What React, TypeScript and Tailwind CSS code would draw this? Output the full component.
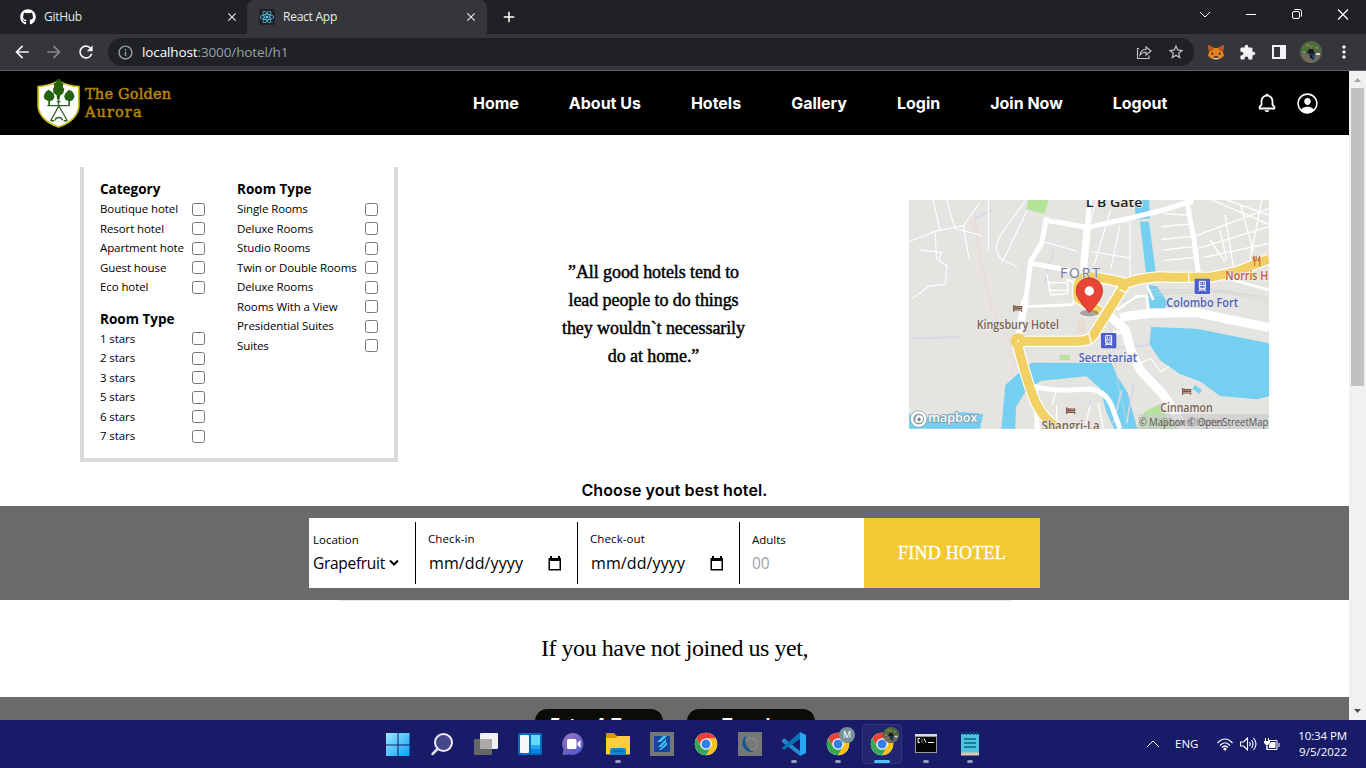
import React from "react";
import { FaGithub, FaReact } from "react-icons/fa";
import { BiBell } from "react-icons/bi";
import { IoPersonCircleOutline } from "react-icons/io5";
import { MdArrowBack, MdArrowForward, MdRefresh, MdExtension, MdClose, MdAdd, MdInfoOutline, MdStarOutline, MdMoreVert } from "react-icons/md";

const UI = "font-['Open_Sans','Noto_Sans',sans-serif]";

function Portrait({ className }: { className: string }) {
  return (
    <svg viewBox="0 0 22 22" className={className}>
      <circle cx="11" cy="11" r="11" fill="#56634a" />
      <path d="M2 6 Q6 1 11 1 Q17 1 20 6 L19 10 L13 8 L8 9 L2 12Z" fill="#4d7036" />
      <path d="M1 14 L10 12 L15 13 L21 13 Q19 21 11 22 Q4 21 1 14Z" fill="#6f6b60" />
      <path d="M2 10l4 1-2 2zM15 5l3 2-2 1zM5 5l3-2 1 2z" fill="#84a35b" />
      <circle cx="11" cy="5.8" r="1.8" fill="#8d6c55" />
      <path d="M9 8 L13 8 L14.500 12 L13 18 L10 17 L9.500 13 L7 12Z" fill="#16181d" />
      <path d="M9 12 L15 13 L14 19 L12 19 L12 15Z" fill="#263b5b" />
      <path d="M16 12h4v2h-4z" fill="#d9d9d2" />
    </svg>
  );
}

function TabStrip() {
  return (
    <div className={`flex h-[34px] bg-[#202124] text-[12px] text-[#e8eaed] ${UI}`}>
      <div className="flex w-[247px] items-center pl-5">
        <FaGithub className="h-4 w-4 text-white" />
        <span className="ml-2 flex-1 tracking-[-0.3px]">GitHub</span>
        <MdClose className="mr-2 h-[14px] w-[14px]" stroke="currentColor" />
      </div>
      <div className="flex w-[240px] items-center rounded-t-lg bg-[#35363a] pl-3">
        <span className="flex h-4 w-4 items-center justify-center rounded-[2px] bg-[#20232a]">
          <FaReact className="h-[14px] w-[14px] text-[#61dafb]" />
        </span>
        <span className="ml-2 flex-1 tracking-[-0.25px]">React App</span>
        <MdClose className="mr-[9px] h-[14px] w-[14px]" stroke="currentColor" />
      </div>
      <div className="flex flex-1 items-center pl-[13px]">
        <MdAdd className="h-[18px] w-[18px] text-white" stroke="currentColor" />
      </div>
      <div className="flex items-center pb-[7px] text-white">
        <svg viewBox="0 0 46 28" className="h-7 w-[46px]" fill="none" stroke="currentColor"><path d="M18 12l5 5 5-5" /></svg>
        <svg viewBox="0 0 46 28" className="h-7 w-[46px]" fill="none" stroke="currentColor"><path d="M18 14.500h10" /></svg>
        <svg viewBox="0 0 46 28" className="h-7 w-[46px]" fill="none" stroke="currentColor"><rect x="18.500" y="11.500" width="7" height="7" rx="1.500" /><path d="M20.500 9.500h5a2 2 0 0 1 2 2v5" /></svg>
        <svg viewBox="0 0 46 28" className="h-7 w-[46px]" fill="none" stroke="currentColor" strokeWidth="1.200"><path d="M18 9.500l10 10M28 9.500l-10 10" /></svg>
      </div>
    </div>
  );
}

function Toolbar() {
  return (
    <div className={`flex h-[37px] items-center border-b border-[#5f6063] bg-[#35363a] pl-3 text-[#f1f3f4] ${UI}`}>
      <MdArrowBack className="h-5 w-5" />
      <MdArrowForward className="ml-3 h-5 w-5 text-[#85868a]" />
      <MdRefresh className="ml-3 h-5 w-5" />
      <div className="ml-3 flex h-7 w-[1086px] items-center rounded-full bg-[#202124] pl-[9px]">
        <MdInfoOutline className="h-[17px] w-[17px] text-[#9aa0a6]" />
        <span className="ml-2 flex-1 text-[13.5px] tracking-[-0.12px] text-white">localhost<span className="text-[#9aa0a6]">:3000/hotel/h1</span></span>
        <svg viewBox="0 0 16 16" className="h-4 w-4 text-[#c5c7ca]" fill="none" stroke="currentColor" strokeWidth="1.100">
          <path d="M3 4.500H1.500v10H13v-3M4 11c.5-4 3-5.500 6-5.500V3l5 4-5 4V8.300C7.500 8.300 5.500 9 4 11Z" />
        </svg>
        <MdStarOutline className="ml-[15px] mr-[9px] h-[18px] w-[18px] text-[#c5c7ca]" />
      </div>
      <svg viewBox="0 0 16 16" className="ml-[14px] h-4 w-4">
        <path d="M0 1l6 3h4l6-3-1 7 1 4-4 3-2-1H6l-2 1-4-3 1-4z" fill="#e8821e" />
        <path d="M0 1l6 3-2 3-3 1zM16 1l-6 3 2 3 3 1z" fill="#b85b1d" />
        <path d="M3 8l3 2-2 1zM13 8l-3 2 2 1z" fill="#3b2c20" />
        <path d="M6 12h4l-.500 2h-3z" fill="#3a3b40" /><path d="M5 14h6l-1 1.500H6z" fill="#d2c8bc" />
      </svg>
      <MdExtension className="ml-[15px] h-[17px] w-[17px]" />
      <svg viewBox="0 0 14 14" className="ml-4 h-[14px] w-[14px]"><path d="M0 0h14v14H0zM2 2v10h6V2z" fill="#f1f3f4" fillRule="evenodd" /></svg>
      <Portrait className="ml-[14px] h-[22px] w-[22px]" />
      <MdMoreVert className="ml-3 h-5 w-5" />
    </div>
  );
}

function Shield() {
  return (
    <svg viewBox="110 232 134 152" className="h-[50px] w-[45px]">
      <path d="M115 258 Q143 257 177 242 Q209 257 239 258 V318 Q234 361 177 381 Q120 361 115 318Z" fill="#fff" stroke="#c9bd1d" strokeWidth="5" />
      <g fill="#24620f">
        <path d="M172 236h11l3 9 6 5-2 9 5 7-4 13-9 6-2 12h-7l-2-13-9-6-2-12 4-8-2-8 8-5z" />
        <path d="M146 268l8 4 8 7 3 9-5 12-9 2v13h-5v-13l-10-5-4-8 4-12zM209 268l10 5 4 7 3 9-6 11-8 3v12h-5v-13l-9-4-4-10 4-10z" />
      </g>
      <path d="M143 316h68M177 297v20M172 304h11M178 317l-25 45M178 317l26 45M153 362h11M193 362h11M167 361q1-9 11-9t11 9" fill="none" stroke="#2d6129" strokeWidth="4" />
    </svg>
  );
}

const links = ["Home", "About Us", "Hotels", "Gallery", "Login", "Join Now", "Logout"];

function Header() {
  return (
    <header className="flex h-16 items-center bg-black pl-9 text-white">
      <Shield />
      <div className="ml-1 w-[388px] font-['DejaVu_Serif',serif] text-[14.5px] leading-[18px] text-[#b8860b] [-webkit-text-stroke:0.5px_#b8860b]">
        <div className="tracking-[0.2px]">The Golden</div>
        <div className="tracking-[1.1px]">Aurora</div>
      </div>
      <nav className="flex flex-1 gap-[50px] whitespace-nowrap font-['Inter',sans-serif] text-[16px] font-bold tracking-[-0.01px]">
        {links.map((l) => <a key={l}>{l}</a>)}
      </nav>
      <BiBell className="h-[22px] w-[22px]" />
      <IoPersonCircleOutline className="ml-[17px] mr-[29px] h-[25px] w-[25px]" />
    </header>
  );
}

function Group({ title, items, width, className = "" }: { title: string; items: string[]; width: string; className?: string }) {
  return (
    <div className={`${width} ${className}`}>
      <h3 className="h-5 text-[13.5px] font-bold leading-5">{title}</h3>
      {items.map((item, i) => (
        <label key={i} className="flex h-[19.5px] items-center justify-between whitespace-nowrap text-[11.5px] tracking-[-0.1px]">
          {item}
          <input type="checkbox" className="m-0 mt-[0.5px] h-[13px] w-[13px]" />
        </label>
      ))}
    </div>
  );
}

function Filters() {
  return (
    <div className={`flex h-[295px] w-[318px] border-x-4 border-b-4 border-[#d9d9d9] pl-4 pt-3 text-black ${UI}`}>
      <div>
        <Group title="Category" width="w-[105px]" items={["Boutique hotel", "Resort hotel", "Apartment hote", "Guest house", "Eco hotel"]} />
        <Group title="Room Type" width="w-[105px]" className="mt-3" items={["1 stars", "2 stars", "3 stars", "5 stars", "6 stars", "7 stars"]} />
      </div>
      <Group title="Room Type" width="w-[141px]" className="ml-8" items={["Single Rooms", "Deluxe Rooms", "Studio Rooms", "Twin or Double Rooms", "Deluxe Rooms", "Rooms With a View", "Presidential Suites", "Suites"]} />
    </div>
  );
}

function Station({ x, y }: { x: number; y: number }) {
  return (
    <g transform={`translate(${x} ${y})`}>
      <rect width="46" height="46" rx="4" fill="#4a5fcd" />
      <path d="M14 8h18v22H14zM17 30l-4 8M29 30l4 8M14 21h18M19 11v7M27 11v7M15 34h16" fill="none" stroke="#fff" strokeWidth="3" />
      <path d="M17 25h3v2h-3zM26 25h3v2h-3z" fill="#fff" />
    </g>
  );
}

function Bed({ x, y }: { x: number; y: number }) {
  return (
    <g transform={`translate(${x} ${y})`} fill="none" stroke="#7b5140" strokeWidth="3.500">
      <path d="M2 0v20M2 15h24v5M2 10h24V5H12v6" /><circle cx="7" cy="5" r="1.500" />
    </g>
  );
}

function HotelMap() {
  return (
    <svg viewBox="27 30 1080 687" preserveAspectRatio="none" className="block h-[229px] w-[360px]">
      <rect x="27" y="30" width="1080" height="687" fill="#e5e4e0" />
      <path d="M225 80 L240 200 L275 360 L355 500 L330 560" fill="none" stroke="#e7ddd6" strokeWidth="6" />
      <ellipse cx="545" cy="410" rx="15" ry="25" fill="#e9dcd2" />
      <g fill="#75cff0">
        <path d="M705 30h42l3 55-44 4zM720 95h27l20 150-29 4zM741 285l30 4 33 50-10 16h-45z" />
        <path d="M753 411L890 416 1107 460V619L1070 628 960 618 902 575 840 552 780 511 749 463z" />
        <path d="M395 518L635 519 652 560 683 608 712 716H643L620 669 601 596 560 559 424 572 380 600 364 625 348 652 346 716H304L316 585 372 535z" />
        <path d="M27 667L40 690 110 677 185 666 250 672 240 716H27zM884 585l22 14-7 12-22-14z" />
      </g>
      <g fill="#b3e49a"><path d="M385 30h61l-13 42-54-14zM479 495h31v15h-31zM712 716l20-50 50-25 15 35 35 41z" /></g>
      <g fill="none" stroke="#d4d4d0" strokeWidth="2">
        <path d="M640 350Q700 310 850 300T1107 335M645 359Q710 318 850 307T1107 341M740 302Q850 290 1107 322M620 360L640 470 655 590 680 690M800 300L980 340M790 312L1000 300" />
      </g>
      <g fill="none" stroke="#d6d6e6" strokeWidth="5">
        <path d="M375 35L305 130Q275 175 303 207L353 231M382 60L305 220M27 155L105 124 190 107 238 40M100 30L120 123M140 30L165 115M190 107L207 207M105 124L110 210M60 180l65 7-9 25 25 14-6 58-47 4-52 38M165 115L245 137M265 30V180M225 85l55-28M36 445L178 441M590 30L570 100M632 60L582 225M660 105L632 238M690 88V270M577 185L690 204M430 155L533 184M435 285Q445 210 458 205V180M640 475L750 465M680 700L700 585M570 630L558 716M640 700L665 600M720 520l32-15 30 40" />
      </g>
      <g fill="none" stroke="#fff" strokeWidth="4">
        <path d="M375 35L305 130Q275 175 303 207L353 231M382 60L305 220M27 155L105 124 190 107 238 40M100 30L120 123M140 30L165 115M190 107L207 207M105 124L110 210M60 180l65 7-9 25 25 14-6 58-47 4-52 38M165 115L245 137M265 30V180M590 30L570 100M632 60L582 225M660 105L632 238M690 88V270M577 185L690 204M430 155L533 184M440 250l13 65 50-5V278h-55v23h55M935 30L1107 103M980 30L1107 75M875 142L1107 55M895 175L1107 110M910 202L1107 160M975 75L1000 230M1020 40L1060 180M1085 30L1050 210M790 70L875 77M785 110L870 102M785 148L875 140M790 180L880 170M790 212L885 202M930 150L975 215M960 120L980 210M720 520l32-15 30 40 25-15M470 600L455 645M470 710V645M570 645L555 716M595 640L610 716" />
        <path d="M380 350L515 344 527 325M497 268L530 280M650 360L710 320 740 317 745 360M980 265L1107 300M740 285L760 330" strokeWidth="8" />
      </g>
      <g fill="none" stroke="#fff" strokeLinejoin="round">
        <path d="M392 216L374 350 353 440M440 80L425 160 390 217M434 91L563 112 693 84 790 60 880 32M395 220L470 234 545 252M570 30L560 125M860 30L882 150 895 250" strokeWidth="15" />
        <path d="M562 115L550 240M355 440L376 330" strokeWidth="22" />
        <path d="M615 365L677 420Q690 490 724 544L792 616 855 716M660 383Q700 375 760 370L890 368 980 387 1107 413" strokeWidth="27" />
        <path d="M637 440Q643 422 682 423M405 590Q460 603 510 600L570 597Q615 602 634 645L660 716M405 590L412 716" strokeWidth="15" />
      </g>
      <g fill="none" stroke="#fff" strokeWidth="34" strokeLinejoin="round">
        <path d="M350 454H530Q570 453 580 435L677 280M677 280Q610 263 560 259 525 265 535 325L600 365M677 280Q750 255 810 262H930L1010 245 1107 207M350 454Q385 590 408 640 435 695 480 716" />
      </g>
      <g fill="none" stroke="#f1d163" strokeWidth="27" strokeLinejoin="round">
        <path d="M350 454H530Q570 453 580 435L677 280M677 280Q610 263 560 259 525 265 535 325L600 365M677 280Q750 255 810 262H930L1010 245 1107 207M350 454Q385 590 408 640 435 695 480 716" />
      </g>
      <circle cx="355" cy="453" r="23" fill="#f1d163" /><circle cx="355" cy="453" r="3" fill="#fff" />
      <path d="M567 430l6 28M658 298l18 9M866 250v27" stroke="#fff" strokeWidth="4" />
      <Station x={884} y={266} /><Station x={603} y={429} />
      <Bed x={339} y={345} /><Bed x={498} y={652} /><Bed x={846} y={594} />
      <path d="M1060 199v12h9v-12M1064 199v30M1079 198v31M1079 200q-8 10 0 16" fill="none" stroke="#cc713a" strokeWidth="3.500" />
      <g fontFamily="'Open Sans', sans-serif" fontSize="35" fontWeight="600" stroke="#efeeea" strokeWidth="4" paintOrder="stroke">
        <text x="557" y="51" fill="#222" fontSize="38" fontWeight="600" textLength="170" lengthAdjust="spacingAndGlyphs">L B Gate</text>
        <text x="480" y="263" fill="#737ba8" fontSize="42" fontWeight="400" textLength="120">FORT</text>
        <text x="230" y="417" fill="#776455" textLength="247" lengthAdjust="spacingAndGlyphs">Kingsbury Hotel</text>
        <text x="799" y="352" fill="#4c5fb9" textLength="215" lengthAdjust="spacingAndGlyphs">Colombo Fort</text>
        <text x="536" y="515" fill="#4c5fb9" textLength="175" lengthAdjust="spacingAndGlyphs">Secretariat</text>
        <text x="976" y="271" fill="#c65c2c" textLength="129" lengthAdjust="spacingAndGlyphs">Norris H</text>
        <text x="781" y="665" fill="#776455" textLength="157" lengthAdjust="spacingAndGlyphs">Cinnamon</text>
        <text x="425" y="720" fill="#776455" textLength="174" lengthAdjust="spacingAndGlyphs">Shangri-La</text>
      </g>
      <ellipse cx="568" cy="369" rx="28" ry="10" fill="#555" opacity=".45" />
      <path d="M568 368Q528 327 528 303A40 40 0 0 1 608 303Q608 327 568 368Z" fill="#e94335" stroke="#b9342a" strokeWidth="2" />
      <circle cx="568" cy="303" r="14" fill="#fff" />
      <rect x="714" y="672" width="393" height="45" fill="#ccc" fillOpacity=".7" />
      <text x="717" y="707" fontFamily="'Open Sans', sans-serif" fontSize="31" fill="#555" textLength="388" lengthAdjust="spacingAndGlyphs">© Mapbox © OpenStreetMap</text>
      <text x="781" y="707" fontFamily="'Open Sans', sans-serif" fontSize="31" fill="#776455" opacity=".55" textLength="190" lengthAdjust="spacingAndGlyphs">Grand Hotel</text>
      <circle cx="56" cy="687" r="20" fill="none" stroke="#fff" strokeWidth="9" /><circle cx="56" cy="687" r="25" fill="none" stroke="#81939d" strokeWidth="2" /><circle cx="56" cy="687" r="16" fill="#81939d" />
      <path d="M46 697q-3-20 10-22 15 1 13 14-3 14-23 8z" fill="#fff" /><path d="M57 680l3 6 5 2-5 3-3 5-3-6-5-2 5-2z" fill="#6b7b80" />
      <text x="84" y="697" fontFamily="'Open Sans', sans-serif" fontWeight="600" fontSize="38" fill="#fff" stroke="#81939d" strokeWidth="4" paintOrder="stroke" textLength="148" lengthAdjust="spacingAndGlyphs">mapbox</text>
    </svg>
  );
}

function DateField({ label }: { label: string }) {
  return (
    <div className="my-1 flex w-[162px] flex-col border-l border-black pl-3">
      <span className="mt-[8px] h-5 text-[11.5px] leading-[18px] tracking-[0.1px]">{label}</span>
      <span className="mt-px flex items-center text-[16px] leading-6">
        <span className="w-[120px] pl-px tracking-[0.1px]">mm/dd/yyyy</span>
        <svg viewBox="0 0 14 15" className="h-[15px] w-[14px]"><path d="M2 0h2v2h6V0h2v2h1v12.500H.500V2H2zM2 5v8h9.500V5z" fill="#000" fillRule="evenodd" /></svg>
      </span>
    </div>
  );
}

function SearchBar() {
  return (
    <div className="flex h-[94px] justify-center bg-[#6a6a6a] pt-3">
      <div className={`flex h-[70px] w-[731px] bg-white text-black ${UI}`}>
        <div className="flex w-[106px] flex-col pl-1">
          <span className="mt-[13px] h-5 text-[11.5px] leading-[18px]">Location</span>
          <span className="flex items-center text-[15.5px] leading-6 tracking-[-0.3px]">
            <span className="w-[76px]">Grapefruit</span>
            <svg viewBox="0 0 10 6" className="h-[6px] w-[10px]" fill="none" stroke="#000" strokeWidth="2"><path d="M1 .500l4 4 4-4" /></svg>
          </span>
        </div>
        <DateField label="Check-in" />
        <DateField label="Check-out" />
        <div className="my-1 flex w-[125px] flex-col border-l border-black pl-3">
          <span className="mt-[9px] h-5 text-[11.5px] leading-[18px]">Adults</span>
          <span className="text-[15.5px] leading-6 text-[#9ca3af]">00</span>
        </div>
        <div className="flex flex-1 items-center justify-center bg-[#f3c931] font-['Liberation_Serif',serif] text-[18px] tracking-[0.25px] text-white [-webkit-text-stroke:0.3px_white]">
          <span>FIND HOTEL</span>
        </div>
      </div>
    </div>
  );
}

function Page() {
  return (
    <main className="flex h-[649px] w-[1349px] flex-col overflow-hidden bg-white">
      <Header />
      <section className="flex h-[327px] pl-20 pt-8">
        <Filters />
        <p className="ml-[158px] mt-[91px] w-[195px] whitespace-nowrap text-center font-['Liberation_Serif',serif] text-[18px] leading-7 tracking-[-0.08px] text-black [-webkit-text-stroke:0.45px_black]">
          ”All good hotels tend to<br />lead people to do things<br />they wouldn`t necessarily<br />do at home.”
        </p>
        <div className="ml-[158px] mt-[33px]"><HotelMap /></div>
      </section>
      <h2 className="h-[44px] pt-4 text-center font-['Inter',sans-serif] text-[16px] font-semibold leading-6 tracking-[0.12px] text-black">Choose yout best hotel.</h2>
      <SearchBar />
      <div className="mx-auto h-px w-[673px] shrink-0 bg-[#e5e7eb]" />
      <p className="h-24 shrink-0 pt-[29px] text-center font-['Liberation_Serif',serif] text-[24px] leading-9 tracking-[-0.45px] text-black">If you have not joined us yet,</p>
      <div className="flex flex-1 justify-center gap-6 overflow-hidden bg-[#6a6a6a] pt-3 font-['Inter',sans-serif] text-[16px] font-bold text-white">
        <div className="h-10 w-32 rounded-xl bg-[#0c0c06] pt-[5px] text-center leading-5">Enter A Tour</div>
        <div className="h-10 w-32 rounded-xl bg-[#0c0c06] pt-[5px] text-center leading-5">Travels</div>
      </div>
    </main>
  );
}

function Scrollbar() {
  return (
    <div className="flex w-[17px] flex-col items-center justify-between bg-[#f1f1f1]">
      <div className="flex flex-col items-center">
        <svg viewBox="0 0 17 17" className="h-[17px] w-[17px]"><path d="M5 11l3.500-4 3.500 4z" fill="#a3a3a3" /></svg>
        <div className="h-[298px] w-[13px] bg-[#c1c1c1]" />
      </div>
      <svg viewBox="0 0 17 17" className="h-[17px] w-[17px]"><path d="M5 6l3.500 4L12 6z" fill="#505050" /></svg>
    </div>
  );
}

function ChromeLogo() {
  return (
    <svg viewBox="0 0 24 24" className="h-6 w-6">
      <circle cx="12" cy="12" r="11.200" fill="#fff" />
      <path d="M2.300 6.400A11.200 11.200 0 0 1 21.700 6.400H12A5.600 5.600 0 0 0 7.150 14.800Z" fill="#ea4335" />
      <path d="M21.700 6.400A11.200 11.200 0 0 1 12 23.200L16.850 14.800A5.600 5.600 0 0 0 12 6.400Z" fill="#fbc116" />
      <path d="M12 23.200A11.200 11.200 0 0 1 2.300 6.400L7.150 14.800A5.600 5.600 0 0 0 16.850 14.800Z" fill="#34a853" />
      <circle cx="12" cy="12" r="5.600" fill="#fff" /><circle cx="12" cy="12" r="4.500" fill="#327fe8" />
    </svg>
  );
}

function TaskItem({ children, dot, active }: { children: React.ReactNode; dot?: boolean; active?: boolean }) {
  return (
    <div className="flex h-12 w-11 flex-col items-center pt-1">
      <div className={active ? "flex h-10 w-10 flex-col items-center rounded-[4px] bg-[#21266f] pt-2 outline-1 -outline-offset-1 outline-[#30357f]" : "flex h-10 w-10 flex-col items-center pt-2"}>
        <div className="relative h-6 w-6">{children}</div>
        {active ? <div className="mt-1 h-[3px] w-4 rounded-full bg-[#4cc2ff]" /> : dot ? <div className="mt-1 h-[3px] w-[6px] rounded-full bg-[#9798bd]" /> : null}
      </div>
    </div>
  );
}

function Taskbar() {
  const s = "h-6 w-6";
  return (
    <footer className={`flex h-12 w-full bg-[#171b68] pl-[376px] text-white ${UI}`}>
      <TaskItem><svg viewBox="0 0 24 24" className={s}><defs><linearGradient id="win" x2="1" y2="1"><stop stopColor="#9be8ff" /><stop offset="1" stopColor="#0aa0f6" /></linearGradient></defs><path d="M0 1h11.500v11.500H0zM12.500 1H23.500v11.500h-11zM0 13.500h11.500v10.500H0zM12.500 13.500h11v10.500h-11z" fill="url(#win)" /></svg></TaskItem>
      <TaskItem><svg viewBox="0 0 24 24" className={s}><circle cx="13.500" cy="10.500" r="8.500" fill="#44488a" stroke="#ececf2" strokeWidth="2" /><path d="M7.500 17l-5 5" stroke="#dedee8" strokeWidth="2.500" strokeLinecap="round" /></svg></TaskItem>
      <TaskItem><svg viewBox="0 0 24 24" className={s}><rect x="6" y="1" width="18" height="16" rx="1" fill="#f1f1f3" /><rect y="7" width="18" height="16" rx="1" fill="#666" /><path d="M6 7h12v10H6z" fill="#aaa" /></svg></TaskItem>
      <TaskItem><svg viewBox="0 0 24 24" className={s}><rect y="1" width="24" height="22" rx="1.500" fill="#0569b9" /><rect x="2" y="3" width="9" height="18" rx="1" fill="#f6f6f6" /><path d="M13 3h9v10h-9z" fill="#66d7ff" /><path d="M13 13h9v4h-9z" fill="#24a8f1" /><path d="M13 17h9v4h-9z" fill="#0584e8" /></svg></TaskItem>
      <TaskItem><svg viewBox="0 0 24 24" className={s}><defs><linearGradient id="chat" x2=".7" y2="1"><stop stopColor="#9d78b4" /><stop offset="1" stopColor="#5358cc" /></linearGradient></defs><path d="M12 1A11 11 0 1 1 7.500 22.500L.500 23l1-6A11 11 0 0 1 12 1Z" fill="url(#chat)" /><rect x="5" y="7" width="9.500" height="10" rx="1.500" fill="#fff" /><path d="M15.500 11l3-3v8l-3-3z" fill="#fff" /></svg></TaskItem>
      <TaskItem dot><svg viewBox="0 0 24 24" className={s}><path d="M0 2q0-1 1-1h7l3 3h12q1 0 1 1v17H0z" fill="#d99600" /><path d="M0 6h9l3-2h12v18.500H0z" fill="#ffce3e" /><path d="M4 23v-5q0-2 2-2h12q2 0 2 2v5z" fill="#1685d1" /><path d="M7 19h10" stroke="#075891" /></svg></TaskItem>
      <TaskItem><svg viewBox="0 0 24 24" className={s}><path d="M0 0h24v24H0z" fill="#777" /><path d="M4 4h16v16H4z" fill="#16459d" /><path d="M13 4h4l-6 6H7zM16 7v3l-5 5H8zM17 10v3l-6 5H9z" fill="#42bdf0" /></svg></TaskItem>
      <TaskItem><ChromeLogo /></TaskItem>
      <TaskItem><svg viewBox="0 0 24 24" className={s}><path d="M0 0h24v24H0z" fill="#777" /><circle cx="13" cy="12" r="6" fill="none" stroke="#858585" strokeWidth="2" /><path d="M8 3Q5 15 16 20 7 21 4.500 13 4 7 8 3z" fill="#17568f" /></svg></TaskItem>
      <TaskItem dot><svg viewBox="0 0 24 24" className={s}><path d="M0 8l2-2 16 13v5L0 10z" fill="#2489ca" /><path d="M0 16L18 0v7L2 18z" fill="#0872b9" /><path d="M18 0l6 3v18l-6 3z" fill="#27a4f2" /></svg></TaskItem>
      <TaskItem dot><ChromeLogo /><span className="absolute -right-[5px] -top-[5px] flex h-4 w-4 items-center justify-center rounded-full bg-[#78909c] text-[9px]">M</span></TaskItem>
      <TaskItem active><ChromeLogo /><Portrait className="absolute -right-[5px] -top-[5px] h-4 w-4" /></TaskItem>
      <TaskItem dot><svg viewBox="0 0 24 24" className={s}><path d="M1 2h22v19H1z" fill="#9a9a9a" /><path d="M2 5h20v15H2z" fill="#050505" /><path d="M1 2h22v2H1z" fill="#ddd" /><path d="M6 6.500H4v4h2M8 7.500v1M8 9.500v1M10 6.500l2 4M14 10.500h6" fill="none" stroke="#fff" /></svg></TaskItem>
      <TaskItem dot><svg viewBox="0 0 24 24" className={s}><path d="M3 2h18v19H3z" fill="#4fc3dd" /><path d="M3 20.500h18v3H3z" fill="#dbc6b0" /><path d="M5 0v3M8.500 0v3M12 0v3M15.500 0v3M19 0v3" stroke="#095d7d" strokeWidth="1.500" /><path d="M6 7h12M6 11h12M6 15h12" stroke="#096582" strokeWidth="1.500" /></svg></TaskItem>
      <div className="ml-[152px] flex flex-1 items-center">
        <svg viewBox="0 0 14 8" className="ml-0.5 h-2 w-[14px]" fill="none" stroke="#fff"><path d="M1 7l6-6 6 6" /></svg>
        <span className="ml-[15px] w-[42px] text-[11.5px]">ENG</span>
        <svg viewBox="0 0 16 13" className="h-[13px] w-4" fill="none" stroke="#fff" strokeWidth="1.200"><path d="M.500 5Q8-3 15.500 5M3 7.500Q8 2 13 7.500M5 9.500Q8 6.500 11 9.500" /><circle cx="8" cy="11" r="1" fill="#fff" /></svg>
        <svg viewBox="0 0 17 14" className="ml-[7px] h-[14px] w-[17px]" fill="none" stroke="#fff" strokeWidth="1.100"><path d="M.500 5h3l4-4v12l-4-4h-3zM9.500 5q1.500 2 0 4M11.500 3q3 4 0 8M13.500 1q5 6 0 12" /></svg>
        <svg viewBox="0 0 16 13" className="ml-[7px] h-[13px] w-4" fill="none" stroke="#fff"><path d="M5 2.500h8v9H3V8M15 5v4M1.500 0v3M4.500 0v3" /><path d="M0 3h6v2L4 7H2L0 5z" fill="#fff" stroke="none" /><path d="M3 7v5" /><path d="M7 4h4.500v6H5V7z" fill="#fff" stroke="none" /></svg>
        <div className="ml-auto mr-[19px] text-right text-[11.5px] leading-4"><div className="tracking-[-0.1px]">10:34 PM</div><div>9/5/2022</div></div>
      </div>
    </footer>
  );
}

export default function App() {
  return (
    <div className="flex h-[768px] w-[1366px] flex-col overflow-hidden bg-white">
      <TabStrip />
      <Toolbar />
      <div className="flex h-[649px]"><Page /><Scrollbar /></div>
      <Taskbar />
    </div>
  );
}
